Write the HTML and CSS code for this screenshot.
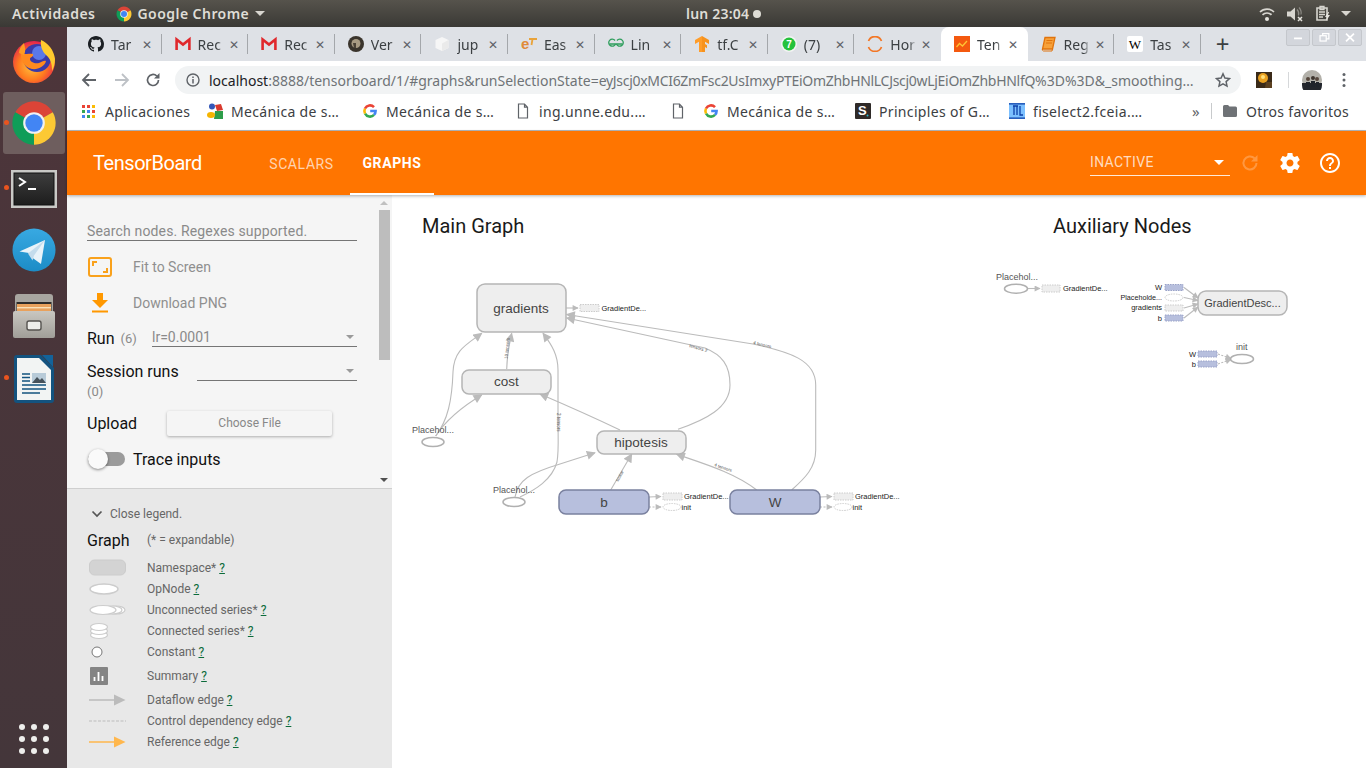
FILE: index.html
```html
<!DOCTYPE html>
<html lang="es">
<head>
<meta charset="utf-8">
<title>TensorBoard</title>
<link rel="stylesheet" href="styles.css">
</head>
<body>
<svg class="sprites" aria-hidden="true">
  <defs>
    <symbol id="i-chrome" viewBox="0 0 48 48">
      <path d="M24 24L6.7 14A20 20 0 0 1 41.3 14Z" fill="#db4437"/>
      <path d="M24 24L41.3 14A20 20 0 0 1 24 44Z" fill="#fcc934"/>
      <path d="M24 24L24 44A20 20 0 0 1 6.7 14Z" fill="#0f9d58"/>
      <circle cx="24" cy="24" r="10" fill="#f1f1f1"/>
      <circle cx="24" cy="24" r="8" fill="#4285f4"/>
    </symbol>
    <symbol id="i-g" viewBox="0 0 16 16">
      <g fill="none" stroke-width="2.6">
        <path d="M8.2 8H13.6A5.6 5.6 0 0 1 12 11.9" stroke="#4285f4"/>
        <path d="M12 11.9A5.6 5.6 0 0 1 3 10.5" stroke="#34a853"/>
        <path d="M3 10.5A5.6 5.6 0 0 1 3 5.5" stroke="#fbbc05"/>
        <path d="M3 5.5A5.6 5.6 0 0 1 12 4.1" stroke="#ea4335"/>
      </g>
    </symbol>
    <symbol id="i-gmail" viewBox="0 0 16 16">
      <path d="M1.6 14V3.4L8 8.6l6.4-5.2V14" fill="none" stroke="#e0282c" stroke-width="2.6"/>
    </symbol>
    <symbol id="i-doc" viewBox="0 0 12 16">
      <path d="M1.5 1h6l3 3.2V15h-9Z M7.5 1v3.2h3" fill="#fff" stroke="#5f6368" stroke-width="1.2"/>
    </symbol>
    <marker id="a" viewBox="0 0 10 10" refX="9" refY="5" markerWidth="10" markerHeight="9" markerUnits="userSpaceOnUse" orient="auto">
      <path d="M0 0L10 5L0 10Z" fill="#bbb"/>
    </marker>
    <marker id="as" viewBox="0 0 10 10" refX="9" refY="5" markerWidth="7" markerHeight="6" markerUnits="userSpaceOnUse" orient="auto">
      <path d="M0 0L10 5L0 10Z" fill="#bbb"/>
    </marker>
    <radialGradient id="ffglobe" cx=".45" cy=".6" r=".6">
      <stop offset="0" stop-color="#ffc43d"/>
      <stop offset=".55" stop-color="#ff7a1f"/>
      <stop offset="1" stop-color="#e3224e"/>
    </radialGradient>
    <linearGradient id="tg" x1="0" y1="0" x2="0" y2="1">
      <stop offset="0" stop-color="#38a9e2"/>
      <stop offset="1" stop-color="#1c8cc6"/>
    </linearGradient>
    <linearGradient id="cab" x1="0" y1="0" x2="0" y2="1">
      <stop offset="0" stop-color="#c9c7c1"/>
      <stop offset="1" stop-color="#a09e98"/>
    </linearGradient>
    <linearGradient id="termbg" x1="0" y1="0" x2="0" y2="1">
      <stop offset="0" stop-color="#3d3d3d"/>
      <stop offset="1" stop-color="#1d1d1d"/>
    </linearGradient>
  </defs>
</svg>

<header class="topbar">
  <div class="top-left">
    <span class="top-item">Actividades</span>
    <svg class="top-chrome"><use href="#i-chrome"/></svg>
    <span class="top-item">Google Chrome</span>
    <span class="top-caret"></span>
  </div>
  <div class="clock"><span class="top-item">lun 23:04</span><span class="clock-dot"></span></div>
  <div class="top-right">
    <svg class="tray" viewBox="0 0 18 18"><g fill="none" stroke="#d8d6d0" stroke-width="1.7"><path d="M2 7a10 10 0 0 1 14 0"/><path d="M4.5 9.8a6.5 6.5 0 0 1 9 0"/></g><circle cx="9" cy="14" r="2" fill="#e6e4de"/></svg>
    <svg class="tray" viewBox="0 0 18 18"><path d="M1 6.5h3.5L9 2.5v13l-4.5-4H1Z" fill="#d8d6d0"/><path d="M11 4.5a6 6 0 0 1 1.5 6M13 2.5a8 8 0 0 1 2 7" fill="none" stroke="#8d8b85" stroke-width="1.2"/><path d="M12 12l4 4m0-4l-4 4" stroke="#e6e4de" stroke-width="1.5"/></svg>
    <svg class="tray" viewBox="0 0 18 18"><path d="M3 3h10v12H3Z" fill="none" stroke="#d8d6d0" stroke-width="1.6"/><path d="M6 1.5h4v3H6ZM5 7h6M5 9.5h6M5 12h4" fill="none" stroke="#d8d6d0" stroke-width="1.3"/><path d="M14 7l-3 5h2l-1 4 4-6h-2l1-3Z" fill="#e6e4de"/></svg>
    <span class="top-caret"></span>
  </div>
</header>

<div class="desktop">
  <nav class="dock">
    <div class="dock-item">
      <svg class="dock-firefox" viewBox="0 0 44 44">
        <circle cx="22" cy="23" r="21" fill="url(#ffglobe)"/>
        <circle cx="25" cy="19" r="14" fill="#3a3aa8"/>
        <circle cx="27" cy="14" r="7" fill="#5a78e8"/>
        <path d="M9 12c3 5 8 2 12 3 1 3-3 3-3 5 0 3 5 5 9 4 3-1 5-3 7-2-1 5-8 9-14 8C11 28 8 20 9 12Z" fill="#ff8a1f"/>
        <path d="M29 1c7 3 13 10 14 19 0 5-1 8-3 12 0-8-2-13-6-16-3-3-6-8-5-15Z" fill="#ffcb2e"/>
        <path d="M12 4c-3 3-5 6-5 10l5 2c2-4 1-8 0-12Z" fill="#ff9b22"/>
      </svg>
    </div>
    <div class="dock-item dock-active">
      <span class="dock-dot"></span>
      <svg class="dock-chrome"><use href="#i-chrome"/></svg>
    </div>
    <div class="dock-item dock-item-term">
      <span class="dock-dot"></span>
      <svg class="dock-term" viewBox="0 0 46 38">
        <rect width="46" height="38" fill="#c9c9c6"/>
        <rect x="3" y="3" width="40" height="32" fill="url(#termbg)" stroke="#111"/>
        <path d="M8 8l6 4-6 4" fill="none" stroke="#fff" stroke-width="2"/>
        <path d="M17 19h8" stroke="#fff" stroke-width="2"/>
      </svg>
    </div>
    <div class="dock-item dock-item-tele">
      <svg class="dock-tele" viewBox="0 0 44 44">
        <circle cx="22" cy="22" r="21.5" fill="url(#tg)"/>
        <path d="M7.500 23.500L33 12l-4 24-9-6.500-3-4.500Z" fill="#e9f3f9"/>
        <path d="M16 25.500L33 12 22 27.500l-1.500 5Z" fill="#c4dcec"/>
      </svg>
    </div>
    <div class="dock-item dock-item-files">
      <svg class="dock-files" viewBox="0 0 42 44">
        <path d="M2 3q0-3 3-3h32q3 0 3 3v42H2Z" fill="#a8a6a0"/>
        <rect x="3.500" y="8" width="35" height="10" fill="#2f2c2a"/>
        <rect x="4" y="10" width="34" height="8" fill="#e9a15c"/>
        <rect x="4" y="13" width="34" height="1.400" fill="#fbe2b9"/>
        <rect y="17" width="42" height="27" rx="2" fill="url(#cab)"/>
        <rect x="14" y="27" width="14" height="9" rx="2" fill="#eeeeea" stroke="#55534f" stroke-width="1.400"/>
      </svg>
    </div>
    <div class="dock-item">
      <span class="dock-dot"></span>
      <svg class="dock-writer" viewBox="0 0 40 48">
        <path d="M0 3q0-3 3-3h24l13 13v32q0 3-3 3H3q-3 0-3-3Z" fill="#13537f"/>
        <path d="M3 3h22l12 12v30H3Z" fill="#f2f4f3"/>
        <path d="M28 0h11v12Z" fill="#13639a"/>
        <path d="M8 19h8M8 22.500h8M8 26h8M8 30h24M8 34h24M8 38h18" stroke="#13537f" stroke-width="1.700"/>
        <rect x="18" y="18" width="14" height="10" fill="#b8cbd8"/>
        <path d="M18 28l5-6 3 3 2-2 4 5Z" fill="#47525a"/>
      </svg>
    </div>
    <div class="apps-grid">
      <i></i><i></i><i></i><i></i><i></i><i></i><i></i><i></i><i></i>
    </div>
  </nav>

  <main class="window">
    <div class="tabstrip">
      <div class="tab"><svg class="fav" viewBox="0 0 16 16"><path fill="#1b1f23" d="M8 0C3.58 0 0 3.58 0 8c0 3.54 2.29 6.53 5.47 7.59.4.07.55-.17.55-.38 0-.19-.01-.82-.01-1.49-2.01.37-2.53-.49-2.69-.94-.09-.23-.48-.94-.82-1.13-.28-.15-.68-.52-.01-.53.63-.01 1.08.58 1.23.82.72 1.21 1.87.87 2.33.66.07-.52.28-.87.51-1.07-1.78-.2-3.64-.89-3.64-3.95 0-.87.31-1.59.82-2.15-.08-.2-.36-1.02.08-2.12 0 0 .67-.21 2.2.82.64-.18 1.32-.27 2-.27.68 0 1.36.09 2 .27 1.53-1.04 2.2-.82 2.2-.82.44 1.1.16 1.92.08 2.12.51.56.82 1.27.82 2.15 0 3.07-1.87 3.75-3.65 3.95.29.25.54.73.54 1.48 0 1.07-.01 1.93-.01 2.2 0 .21.15.46.55.38A8.013 8.013 0 0016 8c0-4.42-3.58-8-8-8z"/></svg><span class="tab-title">Tar</span><span class="tab-x">✕</span></div>
      <div class="tab"><svg class="fav"><use href="#i-gmail"/></svg><span class="tab-title">Rec</span><span class="tab-x">✕</span></div>
      <div class="tab"><svg class="fav"><use href="#i-gmail"/></svg><span class="tab-title">Rec</span><span class="tab-x">✕</span></div>
      <div class="tab"><svg class="fav" viewBox="0 0 16 16"><circle cx="8" cy="8" r="8" fill="#3a342c"/><circle cx="8" cy="7.500" r="4.500" fill="#a89a82"/><path d="M5 7h3v5H6Z" fill="#4b4236"/></svg><span class="tab-title">Ver</span><span class="tab-x">✕</span></div>
      <div class="tab"><svg class="fav" viewBox="0 0 16 16"><path d="M8 1l6.500 3v8L8 15l-6.500-3V4Z" fill="#f6f6f6"/><path d="M8 7.500l6.500-3.500v8L8 15Z" fill="#eaeaea"/></svg><span class="tab-title">jup</span><span class="tab-x">✕</span></div>
      <div class="tab"><svg class="fav" viewBox="0 0 16 16"><text class="fav-et" x="0" y="13">e</text><path d="M8 3h8M11.500 3l-1 6" stroke="#e9a33a" stroke-width="1.800" fill="none"/></svg><span class="tab-title">Eas</span><span class="tab-x">✕</span></div>
      <div class="tab"><svg class="fav" viewBox="0 0 16 16"><g fill="none" stroke="#2f9e5d" stroke-width="1.300"><path d="M8 8H1.500M8 8h6.500"/><path d="M7 4.500A3.500 3.500 0 1 0 7.500 8M9 4.500A3.500 3.500 0 1 1 8.500 8"/></g></svg><span class="tab-title">Lin</span><span class="tab-x">✕</span></div>
      <div class="tab"><svg class="fav" viewBox="0 0 16 16"><path d="M8 0L15 4v4l-4-2.300V8l2 1.200v3L11 11v5l-3 0V0Z" fill="#f7931e"/><path d="M8 0L1 4v4l4-2.300V16h3Z" fill="#ff9d2a"/></svg><span class="tab-title">tf.C</span><span class="tab-x">✕</span></div>
      <div class="tab"><svg class="fav" viewBox="0 0 16 16"><circle cx="8" cy="8" r="8" fill="#f4f4f4"/><circle cx="8" cy="8" r="6.500" fill="#25c23c"/><text class="fav-7" x="8" y="11.500">7</text></svg><span class="tab-title">(7)</span><span class="tab-x">✕</span></div>
      <div class="tab"><svg class="fav" viewBox="0 0 16 16"><g fill="none" stroke="#f37726" stroke-width="1.700"><path d="M1.500 5a7 7 0 0 1 13 0"/><path d="M1.500 11a7 7 0 0 0 13 0"/></g></svg><span class="tab-title">Hor</span><span class="tab-x">✕</span></div>
      <div class="tab tab-active"><svg class="fav" viewBox="0 0 16 16"><rect width="16" height="16" fill="#f4590f"/><path d="M2.500 11l3-3.500 3 2.500 4.500-5" fill="none" stroke="#ffc433" stroke-width="1.300"/></svg><span class="tab-title">Ten</span><span class="tab-x">✕</span></div>
      <div class="tab"><svg class="fav" viewBox="0 0 16 16"><path d="M4 1.500h10L11.500 13H1.500Z" fill="#f7a13a" stroke="#e0730c" stroke-width="1.300"/><path d="M1.500 13a1.500 1.500 0 0 0 1 2H11l.5-2M5.500 4.500h6M5 7h6" fill="none" stroke="#e0730c" stroke-width="1"/></svg><span class="tab-title">Reg</span><span class="tab-x">✕</span></div>
      <div class="tab"><svg class="fav" viewBox="0 0 16 16"><rect width="16" height="16" rx="2" fill="#fff"/><text class="fav-w" x="8" y="12.500">W</text></svg><span class="tab-title">Tas</span><span class="tab-x">✕</span></div>
      <span class="newtab">+</span>
      <div class="winctl">
        <span class="winbtn"><svg viewBox="0 0 23 17"><path d="M7 9.500h9" stroke="#fff" stroke-width="2"/></svg></span>
        <span class="winbtn"><svg viewBox="0 0 23 17"><g fill="none" stroke="#fff" stroke-width="1.400"><rect x="7" y="6.500" width="7" height="6"/><path d="M10 6.500V4h7v6h-3"/></g></svg></span>
        <span class="winbtn"><svg viewBox="0 0 23 17"><path d="M7 4l9 9m0-9l-9 9" stroke="#fff" stroke-width="2"/></svg></span>
      </div>
    </div>

    <div class="toolbar">
      <svg class="tb-ic tb-back" viewBox="0 0 16 16"><path d="M15 8H2M8 2L2 8l6 6" fill="none" stroke="#5f6368" stroke-width="1.800"/></svg>
      <svg class="tb-ic tb-fwd" viewBox="0 0 16 16"><path d="M1 8h13M8 2l6 6-6 6" fill="none" stroke="#bdc1c6" stroke-width="1.800"/></svg>
      <svg class="tb-ic tb-reload" viewBox="0 0 16 16"><path d="M13.500 8A5.500 5.500 0 1 1 11.800 4" fill="none" stroke="#5f6368" stroke-width="1.700"/><path d="M14.500 1v5.500H9Z" fill="#5f6368"/></svg>
      <div class="omnibox">
        <svg class="omni-info" viewBox="0 0 14 14"><circle cx="7" cy="7" r="6" fill="none" stroke="#5f6368" stroke-width="1.400"/><path d="M7 6v4.500M7 3.500v1.500" stroke="#5f6368" stroke-width="1.500"/></svg>
        <span class="url"><b>localhost</b>:8888/tensorboard/1/#graphs&amp;runSelectionState=<span class="url-token">eyJscj0xMCI6ZmFsc2UsImxyPTEiOmZhbHNlLCJscj0wLjEiOmZhbHNlfQ</span>%3D%3D&amp;_smoothing…</span>
        <svg class="omni-star" viewBox="0 0 16 16"><path d="M8 1.800l1.900 4.200 4.600.5-3.400 3.100.9 4.500L8 11.800l-4 2.300.9-4.500L1.500 6.500l4.600-.5Z" fill="none" stroke="#5f6368" stroke-width="1.500"/></svg>
      </div>
      <svg class="ext" viewBox="0 0 16 16"><rect width="16" height="16" fill="#3a2a18"/><circle cx="7" cy="6" r="5" fill="#e8a020"/><circle cx="7" cy="5" r="2" fill="#ffe07a"/><path d="M10 10h6v6h-7Z" fill="#5b4020"/></svg>
      <span class="tb-sep"></span>
      <svg class="avatar" viewBox="0 0 20 20"><circle cx="10" cy="10" r="10" fill="#b3b1aa"/><path d="M0 13h20v2a10 10 0 0 1-20 0Z" fill="#23262c"/><circle cx="6" cy="9" r="2" fill="#55463c"/><circle cx="11" cy="8" r="2" fill="#3d342d"/><circle cx="15" cy="9" r="2" fill="#55463c"/><path d="M4 12h4v5H4ZM9 11h4v6H9ZM14 12h3v5h-3Z" fill="#20242b"/></svg>
      <svg class="kebab" viewBox="0 0 4 16"><circle cx="2" cy="2.500" r="1.500"/><circle cx="2" cy="8" r="1.500"/><circle cx="2" cy="13.500" r="1.500"/></svg>
    </div>

    <div class="bookmarks">
      <div class="bm"><svg class="bm-apps" viewBox="0 0 13 13"><rect width="3" height="3" fill="#ea4335"/><rect x="5" width="3" height="3" fill="#ea4335"/><rect x="10" width="3" height="3" fill="#fbbc05"/><rect y="5" width="3" height="3" fill="#34a853"/><rect x="5" y="5" width="3" height="3" fill="#4285f4"/><rect x="10" y="5" width="3" height="3" fill="#ea4335"/><rect y="10" width="3" height="3" fill="#4285f4"/><rect x="5" y="10" width="3" height="3" fill="#34a853"/><rect x="10" y="10" width="3" height="3" fill="#fbbc05"/></svg><span class="bm-label">Aplicaciones</span></div>
      <div class="bm"><svg class="bm-ic" viewBox="0 0 16 16"><circle cx="5" cy="3.500" r="3" fill="#3457b8"/><path d="M8 2l6-1 2 6-6 1Z" fill="#d93a2e"/><path d="M8 8h8v8H7Z" fill="#2e9d49"/><ellipse cx="4" cy="12" rx="4" ry="3" fill="#f5b400"/></svg><span class="bm-label">Mecánica de s…</span></div>
      <div class="bm"><svg class="bm-ic"><use href="#i-g"/></svg><span class="bm-label">Mecánica de s…</span></div>
      <div class="bm"><svg class="bm-doc"><use href="#i-doc"/></svg><span class="bm-label">ing.unne.edu.…</span></div>
      <div class="bm"><svg class="bm-doc"><use href="#i-doc"/></svg></div>
      <div class="bm"><svg class="bm-ic"><use href="#i-g"/></svg><span class="bm-label">Mecánica de s…</span></div>
      <div class="bm"><svg class="bm-ic" viewBox="0 0 16 16"><rect width="16" height="16" rx="1" fill="#2f2a28"/><text class="fav-s" x="7.500" y="12">S</text><circle cx="12.500" cy="12.500" r="1" fill="#2bb5c9"/></svg><span class="bm-label">Principles of G…</span></div>
      <div class="bm"><svg class="bm-ic" viewBox="0 0 16 16"><rect width="16" height="16" fill="#7cc0ff"/><path d="M0 .8h16M0 15.200h16M4 3h5M5 3v9M8 3v9M11 3v9h3" stroke="#0c3fa8" stroke-width="1.300" fill="none"/></svg><span class="bm-label">fiselect2.fceia.…</span></div>
      <div class="bm-end">
        <span class="bm-more">»</span>
        <span class="bm-sep"></span>
        <svg class="bm-folder" viewBox="0 0 14 12"><path d="M0 1.500q0-1.500 1.500-1.500H5l1.500 1.500h6q1.500 0 1.500 1.500v7.500q0 1.500-1.500 1.500h-11Q0 12 0 10.500Z" fill="#6f7276"/></svg>
        <span class="bm-label">Otros favoritos</span>
      </div>
    </div>

    <div class="tb-header">
      <span class="tb-logo">TensorBoard</span>
      <nav class="tb-tabs">
        <span class="tb-tab tb-tab-scalars">SCALARS</span>
        <span class="tb-tab tb-tab-on">GRAPHS</span>
      </nav>
      <div class="tb-actions">
        <div class="tb-select"><span>INACTIVE</span><i class="caret-white"></i></div>
        <svg class="tb-act tb-dim" viewBox="0 0 20 20"><path d="M16.500 10A6.500 6.500 0 1 1 14.500 5.300" fill="none" stroke="#fff" stroke-width="2"/><path d="M17.500 2v6.500H11Z" fill="#fff"/></svg>
        <svg class="tb-act" viewBox="0 0 24 24"><path fill="#fff" d="M19.430 12.980c.04-.32.07-.64.07-.98s-.03-.66-.07-.98l2.110-1.650c.19-.15.24-.42.12-.64l-2-3.460c-.12-.22-.39-.3-.61-.22l-2.490 1c-.52-.4-1.080-.73-1.690-.98l-.38-2.650C14.460 2.180 14.250 2 14 2h-4c-.25 0-.46.18-.49.42l-.38 2.650c-.61.25-1.170.59-1.690.98l-2.490-1c-.23-.09-.49 0-.61.22l-2 3.460c-.13.220-.07.49.12.64l2.110 1.650c-.04.32-.07.65-.07.98s.03.66.07.98l-2.110 1.650c-.19.150-.24.420-.12.640l2 3.460c.12.220.39.300.61.220l2.490-1c.52.400 1.080.730 1.690.980l.38 2.650c.03.240.24.420.49.420h4c.25 0 .46-.18.49-.42l.38-2.650c.61-.25 1.170-.59 1.690-.98l2.490 1c.23.090.49 0 .61-.22l2-3.460c.12-.22.07-.49-.12-.64l-2.110-1.650zM12 15.500c-1.930 0-3.500-1.570-3.500-3.500s1.570-3.500 3.500-3.500 3.500 1.570 3.500 3.500-1.570 3.500-3.500 3.500z"/></svg>
        <svg class="tb-act" viewBox="0 0 24 24"><path fill="#fff" d="M11 18h2v-2h-2v2zm1-16C6.480 2 2 6.480 2 12s4.480 10 10 10 10-4.480 10-10S17.520 2 12 2zm0 18c-4.410 0-8-3.590-8-8s3.590-8 8-8 8 3.590 8 8-3.590 8-8 8zm0-14c-2.210 0-4 1.790-4 4h2c0-1.100.9-2 2-2s2 .9 2 2c0 2-3 1.750-3 5h2c0-2.250 3-2.500 3-5 0-2.210-1.790-4-4-4z"/></svg>
      </div>
    </div>

    <div class="tb-body">
      <aside class="sidebar">
        <div class="side-top">
          <div class="controls">
            <div class="search">Search nodes. Regexes supported.</div>
            <div class="action action-first">
              <svg class="act-ic" viewBox="0 0 24 20"><rect x="1" y="1" width="22" height="18" rx="2" fill="none" stroke="#f9a11b" stroke-width="2"/><path d="M5 9V5h4M19 11v4h-4" fill="none" stroke="#f9a11b" stroke-width="2"/></svg>
              <span>Fit to Screen</span>
            </div>
            <div class="action">
              <svg class="act-ic" viewBox="0 0 24 20"><path d="M9 0h6v7h5l-8 8-8-8h5Z" fill="#ff9800"/><rect x="4" y="17.500" width="16" height="2" fill="#ff9800"/></svg>
              <span>Download PNG</span>
            </div>
            <div class="run-row">
              <span class="ctl-label">Run</span><span class="count">(6)</span>
              <div class="select select-run"><span>lr=0.0001</span><i class="caret-grey"></i></div>
            </div>
            <div class="session-row">
              <span class="ctl-label">Session runs</span>
              <div class="select select-session"><i class="caret-grey"></i></div>
            </div>
            <div class="count count-session">(0)</div>
            <div class="upload-row">
              <span class="ctl-label">Upload</span>
              <span class="choose">Choose File</span>
            </div>
            <div class="trace-row">
              <span class="toggle"><i></i></span>
              <span class="ctl-label">Trace inputs</span>
            </div>
          </div>
          <div class="sbar">
            <i class="sb-up"></i>
            <div class="sb-track"><div class="sb-thumb"></div></div>
            <i class="sb-down"></i>
          </div>
        </div>

        <div class="legend">
          <div class="legend-head">
            <svg class="chev" viewBox="0 0 12 8"><path d="M1.500 1.500L6 6l4.500-4.500" fill="none" stroke="#555" stroke-width="1.700"/></svg>
            <span>Close legend.</span>
          </div>
          <div class="legend-title"><span class="legend-graph">Graph</span><span>(* = expandable)</span></div>
          <div class="lg lg-1"><svg class="lg-ic" viewBox="0 0 40 18"><rect x="2.500" y="1" width="36" height="15" rx="5" fill="#d3d3d3" stroke="#ccc"/></svg><span>Namespace* <a>?</a></span></div>
          <div class="lg lg-2"><svg class="lg-ic" viewBox="0 0 40 18"><ellipse cx="17" cy="9" rx="14" ry="5" fill="#fff" stroke="#ccc" stroke-width="1.500"/></svg><span>OpNode <a>?</a></span></div>
          <div class="lg lg-3"><svg class="lg-ic" viewBox="0 0 40 18"><g fill="#fff" stroke="#ccc" stroke-width="1.200"><ellipse cx="29" cy="9" rx="9" ry="4"/><ellipse cx="25" cy="9" rx="10" ry="4"/><ellipse cx="16" cy="9" rx="13" ry="4.500"/></g></svg><span>Unconnected series* <a>?</a></span></div>
          <div class="lg lg-4"><svg class="lg-ic" viewBox="0 0 40 18"><g fill="#fff" stroke="#ccc" stroke-width="1.200"><ellipse cx="12" cy="13" rx="8.500" ry="3.500"/><ellipse cx="12" cy="9" rx="8.500" ry="3.500"/><ellipse cx="12" cy="5" rx="8.500" ry="3.500"/></g></svg><span>Connected series* <a>?</a></span></div>
          <div class="lg lg-5"><svg class="lg-ic" viewBox="0 0 40 18"><circle cx="10" cy="9" r="5" fill="#fff" stroke="#777"/></svg><span>Constant <a>?</a></span></div>
          <div class="lg lg-6"><svg class="lg-ic" viewBox="0 0 40 18"><rect x="3" width="18" height="18" rx="1" fill="#848484"/><path d="M7.500 10v4M11.500 5v9M15.500 9v5" stroke="#fff" stroke-width="1.800"/></svg><span>Summary <a>?</a></span></div>
          <div class="lg lg-7"><svg class="lg-ic" viewBox="0 0 40 18"><path d="M2 9h28" stroke="#bbb" stroke-width="1.500"/><path d="M27 3.500L38.500 9 27 14.500Z" fill="#bbb"/></svg><span>Dataflow edge <a>?</a></span></div>
          <div class="lg lg-8"><svg class="lg-ic" viewBox="0 0 40 18"><path d="M2 9h37" stroke="#bbb" stroke-width="1.200" stroke-dasharray="3 1.500"/></svg><span>Control dependency edge <a>?</a></span></div>
          <div class="lg lg-9"><svg class="lg-ic" viewBox="0 0 40 18"><path d="M2 9h28" stroke="#ffb74d" stroke-width="1.500"/><path d="M27 3.500L38.500 9 27 14.500Z" fill="#ffb74d"/></svg><span>Reference edge <a>?</a></span></div>
        </div>
      </aside>

      <section class="canvas">
        <svg class="scene" viewBox="392 195 974 573">
          <text class="scene-title" x="422" y="233">Main Graph</text>
          <text class="scene-title" x="1053" y="233">Auxiliary Nodes</text>

          <g class="edges">
            <path d="M435.700 436C448 420 452 400 453 372C454 350 466 345 481.700 333.300" marker-end="url(#a)"/>
            <path d="M435.700 436C446 420 460 408 481.700 395" marker-end="url(#a)"/>
            <path d="M506.700 369C507 355 509 345 511.700 333.300" marker-end="url(#a)"/>
            <path d="M520 497C535 490 552 480 557 462C559 450 558 440 558 420L558 370C558 355 552 345 543 333.300" marker-end="url(#a)"/>
            <path d="M515 497C518 480 530 473 560 464L595 452.700" marker-end="url(#a)"/>
            <path d="M620 430C595 418 568 406 540 394" marker-end="url(#a)"/>
            <path d="M610.700 490L631.700 454" marker-end="url(#a)"/>
            <path d="M756.700 490C735 473 705 464 676.700 454.300" marker-end="url(#a)"/>
            <path d="M678 429.300C705 420 730 408 730 385C730 365 722 355 705 348L566.700 318" marker-end="url(#a)"/>
            <path d="M791.700 490C805 478 815.700 468 815.700 450V385C815.700 360 790 352 753 344L566.700 314.500" marker-end="url(#a)"/>
            <path d="M565 308H578" marker-end="url(#as)"/>
            <path d="M649 497L661 496.500" marker-end="url(#as)"/>
            <path d="M820 497L832 496.500" marker-end="url(#as)"/>
            <path class="dash" d="M649 507H661" marker-end="url(#as)"/>
            <path class="dash" d="M820 507H832" marker-end="url(#as)"/>
            <path d="M1028 288.500H1040" marker-end="url(#as)"/>
            <path d="M1184 287.500L1198 298" marker-end="url(#as)"/>
            <path d="M1184 297.500L1198 300.500" marker-end="url(#as)"/>
            <path d="M1184 308L1198 304" marker-end="url(#as)"/>
            <path d="M1184 318L1198 307" marker-end="url(#as)"/>
            <path class="dash" d="M1218 354L1231 358.500" marker-end="url(#as)"/>
            <path class="dash" d="M1218 364L1231 359.500" marker-end="url(#as)"/>
          </g>

          <g class="edge-labels">
            <text transform="translate(507.500 359) rotate(-84)">10 tensors</text>
            <text transform="translate(557 413) rotate(90)">2 tensors</text>
            <text transform="translate(618 482) rotate(-60)">scalar</text>
            <text transform="translate(714 466) rotate(19)">4 tensors</text>
            <text transform="translate(689 347) rotate(16)">tensors 2</text>
            <text transform="translate(753 344) rotate(13)">4 tensors</text>
          </g>

          <g class="node">
            <rect x="477" y="284" width="89" height="48" rx="8"/>
            <rect x="462" y="370" width="89" height="24" rx="7"/>
            <rect x="597" y="431" width="89" height="23" rx="7"/>
            <rect x="1198" y="291" width="89" height="24" rx="8"/>
          </g>
          <g class="node node-var">
            <rect x="559" y="490" width="90" height="24" rx="7"/>
            <rect x="730" y="490" width="90" height="24" rx="7"/>
          </g>
          <g class="node-text">
            <text x="521" y="313">gradients</text>
            <text x="506.500" y="386">cost</text>
            <text x="641" y="447">hipotesis</text>
            <text x="604" y="507">b</text>
            <text x="775" y="507">W</text>
            <text class="node-text-aux" x="1242.500" y="307">GradientDesc...</text>
          </g>

          <g class="op">
            <ellipse cx="433" cy="442" rx="11" ry="4.500"/>
            <ellipse cx="514" cy="502" rx="11" ry="4.500"/>
            <ellipse cx="1016" cy="288.700" rx="11.500" ry="4.500"/>
            <ellipse cx="1242" cy="359" rx="11.500" ry="4.500"/>
          </g>
          <g class="op-text">
            <text x="412" y="433">Placehol...</text>
            <text x="493" y="493">Placehol...</text>
            <text x="996" y="280">Placehol...</text>
            <text x="1236" y="350">init</text>
          </g>

          <g class="mini">
            <rect x="580" y="304.500" width="19" height="7"/>
            <rect x="663" y="493" width="19" height="7"/>
            <rect x="834" y="493" width="19" height="7"/>
            <rect x="1042" y="285" width="18" height="7"/>
            <rect x="1165" y="305" width="18" height="6"/>
            <ellipse cx="672" cy="507" rx="9" ry="3.500"/>
            <ellipse cx="843" cy="507" rx="9" ry="3.500"/>
            <ellipse cx="1174" cy="297.500" rx="9" ry="3.500"/>
          </g>
          <g class="mini mini-var">
            <rect x="1165" y="284.500" width="18" height="6"/>
            <rect x="1165" y="315" width="18" height="6"/>
            <rect x="1198" y="351" width="19" height="6"/>
            <rect x="1198" y="361" width="19" height="6"/>
          </g>
          <g class="mini-text">
            <text x="601.500" y="311">GradientDe...</text>
            <text x="684" y="499">GradientDe...</text>
            <text x="681.500" y="510">init</text>
            <text x="855" y="499">GradientDe...</text>
            <text x="852.500" y="510">init</text>
            <text x="1063" y="291">GradientDe...</text>
          </g>
          <g class="mini-text mini-end">
            <text x="1162" y="290">W</text>
            <text class="mini-tight" x="1162" y="300">Placeholde...</text>
            <text x="1162" y="310">gradients</text>
            <text x="1162" y="321">b</text>
            <text x="1196" y="357">W</text>
            <text x="1196" y="367">b</text>
          </g>
        </svg>
      </section>
    </div>
  </main>
</div>
</body>
</html>
```

FILE: styles.css
```css
* { box-sizing: border-box; }
html, body { margin: 0; height: 100%; overflow: hidden; }
body {
  width: 1366px; height: 768px;
  display: flex; flex-direction: column;
  font-family: "Noto Sans", sans-serif;
  background: #fff;
}
.sprites { position: absolute; width: 0; height: 0; }

/* top bar */
.topbar {
  flex: none; height: 27px;
  display: flex; align-items: center;
  background: linear-gradient(#56534c, #3a3935);
  color: #dfddd6;
  font-size: 14px; font-weight: 600; letter-spacing: .45px;
}
.top-left { flex: none; width: 686px; padding-left: 12px; display: flex; align-items: center; }
.top-chrome { width: 18px; height: 18px; margin: 0 4px 0 20px; }
.top-caret {
  width: 0; height: 0; margin-left: 6px;
  border-left: 5px solid transparent; border-right: 5px solid transparent;
  border-top: 5px solid #d8d6d0;
}
.clock { display: flex; align-items: center; letter-spacing: .2px; }
.clock-dot { width: 8px; height: 8px; margin-left: 4px; border-radius: 50%; background: #dfddd6; }
.top-right { margin-left: auto; padding-right: 15px; display: flex; align-items: center; gap: 10px; }
.top-right .top-caret { margin-left: -1px; }
.tray { width: 18px; height: 18px; }

.desktop { flex: 1; display: flex; min-height: 0; }

/* dock */
.dock {
  flex: none; width: 67px;
  display: flex; flex-direction: column; align-items: center;
  background: linear-gradient(#4d353a, #44363a);
  padding-top: 2px;
}
.dock-item {
  position: relative; width: 62px; height: 63px;
  display: flex; align-items: center; justify-content: center;
}
.dock-active { background: #6e5e5e; border-radius: 3px; height: 62px; }
.dock-item-term { margin-top: 3px; }
.dock-item-tele { margin-top: -2px; }
.dock-item-files { margin-top: 3px; }
.dock-dot {
  position: absolute; left: 1px; top: 28px;
  width: 5px; height: 5px; border-radius: 50%; background: #e9541f;
}
.dock-firefox { width: 44px; height: 44px; }
.dock-chrome { width: 52px; height: 52px; }
.dock-term { width: 46px; height: 38px; }
.dock-tele { width: 44px; height: 44px; }
.dock-files { width: 42px; height: 44px; }
.dock-writer { width: 40px; height: 48px; }
.apps-grid {
  margin-top: auto; margin-bottom: 14px;
  display: grid; grid-template-columns: repeat(3, 6px); gap: 6px;
}
.apps-grid i { width: 6px; height: 6px; border-radius: 50%; background: #eeeeec; }

/* chrome */
.window { flex: 1; min-width: 0; display: flex; flex-direction: column; }
.tabstrip {
  flex: none; height: 34px; padding-left: 8px;
  display: flex; align-items: stretch;
  background: #dee1e6; color: #3c4043; font-size: 14px;
}
.tab {
  flex: none; width: 86.6px; padding-left: 13px;
  display: flex; align-items: center;
  position: relative;
}
.tab::after {
  content: ""; position: absolute; right: 0; top: 7px; bottom: 7px; width: 1px; background: #a4a7ab;
}
.tab:has(+ .tab-active)::after, .tab-active::after { display: none; }
.tab-active { background: #fff; border-radius: 8px 8px 0 0; }
.fav { flex: none; width: 16px; height: 16px; }
.tab-title {
  width: 26px; margin-left: 7px; overflow: hidden; white-space: nowrap;
  -webkit-mask-image: linear-gradient(90deg, #000 75%, transparent);
  mask-image: linear-gradient(90deg, #000 75%, transparent);
}
.tab-x { margin-left: 3px; width: 14px; font-size: 12px; color: #5f6368; text-align: center; }
.fav-et { font: 700 15px "Liberation Sans", sans-serif; fill: #e08a3a; }
.fav-7 { font: 700 10px "Liberation Sans", sans-serif; fill: #fff; text-anchor: middle; }
.fav-w { font: 400 13px "Liberation Serif", serif; fill: #000; text-anchor: middle; }
.fav-s { font: 700 13px "Liberation Sans", sans-serif; fill: #fff; text-anchor: middle; }
.newtab { margin-left: 15px; align-self: center; font-size: 24px; font-weight: 400; color: #3c4043; line-height: 1; }
.winctl { margin-left: auto; margin-right: 4px; margin-top: 2px; display: flex; gap: 2px; }
.winbtn { width: 24px; height: 17px; border: 1px solid #c4c7cc; border-radius: 2px; background: #d3d6dc; display: block; }
.winbtn svg { display: block; width: 22px; height: 15px; }

.toolbar {
  flex: none; height: 33px; padding-top: 5px; padding-right: 0;
  display: flex; align-items: center;
  background: #fff;
}
.tb-ic { flex: none; width: 16px; height: 16px; }
.tb-back { margin-left: 14px; }
.tb-fwd { margin-left: 17px; }
.tb-reload { margin-left: 15px; }
.omnibox {
  flex: none; margin-left: 14px; width: 1066px; height: 28px; padding: 0 10px 0 11px;
  display: flex; align-items: center;
  background: #f1f3f4; border-radius: 14px;
  font-size: 14px; color: #6f7377;
}
.omni-info { flex: none; width: 14px; height: 14px; margin-right: 9px; }
.url { flex: 1; white-space: nowrap; overflow: hidden; }
.url b { font-weight: 400; color: #202124; }
.url-token { letter-spacing: -.3px; }
.omni-star { flex: none; width: 16px; height: 16px; margin-right: 0; }
.ext { flex: none; width: 16px; height: 16px; margin-left: 15px; }
.tb-sep { flex: none; width: 1px; height: 16px; margin-left: 16px; background: #d6d8da; }
.avatar { flex: none; width: 20px; height: 20px; margin-left: 13px; }
.kebab { flex: none; width: 4px; height: 16px; margin-left: 20px; fill: #5f6368; }

.bookmarks {
  flex: none; height: 37px; padding-left: 15px; padding-bottom: 2px;
  display: grid; align-items: center;
  grid-template-columns: 125px 155px 155px 155px 31px 152px 154px 137px 1fr;
  background: #fff; border-bottom: 1px solid #b6b8bb;
  font-size: 14px; color: #3c4043; letter-spacing: .33px;
}
.bm { display: flex; align-items: center; white-space: nowrap; }
.bm-apps { flex: none; width: 13px; height: 13px; margin-right: 10px; }
.bm-ic { flex: none; width: 16px; height: 16px; margin-right: 8px; }
.bm-doc { flex: none; width: 12px; height: 16px; margin-right: 10px; }
.bm-label { display: block; }
.bm-end { display: flex; align-items: center; padding-left: 46px; }
.bm-more { width: 12px; color: #5f6368; font-size: 15px; }
.bm-sep { width: 1px; height: 16px; margin: 0 11px 0 7px; background: #c8cacc; }
.bm-folder { flex: none; width: 14px; height: 12px; margin-right: 9px; }

/* tensorboard header */
.tb-header {
  flex: none; height: 64px; position: relative; z-index: 2;
  display: flex; align-items: center;
  background: #ff7500; color: #fff;
  box-shadow: 0 1px 3px rgba(0,0,0,.3);
  font-family: Roboto, sans-serif;
}
.tb-logo { margin-left: 26px; font-size: 20px; letter-spacing: -.45px; width: 164px; }
.tb-tabs { display: flex; align-self: stretch; }
.tb-tab {
  display: flex; align-items: center; justify-content: center;
  width: 84px; padding-top: 2px; font-size: 14px; color: rgba(255,255,255,.7);
  letter-spacing: .6px;
}
.tb-tab-scalars { width: 89px; margin-right: 4px; }
.tb-tab-on { color: #fff; font-weight: 700; border-bottom: 2px solid #fff; }
.tb-actions { margin-left: auto; display: flex; align-items: center; padding-right: 24px; }
.tb-select {
  width: 140px; height: 27px; padding-top: 5px; position: relative;
  border-bottom: 1px solid rgba(255,255,255,.85);
  font-size: 14px; letter-spacing: .35px; color: rgba(255,255,255,.75);
  margin-top: -1px;
}
.caret-white {
  position: absolute; right: 6px; top: 11px;
  border-left: 5px solid transparent; border-right: 5px solid transparent; border-top: 5px solid #fff;
}
.tb-act { width: 24px; height: 24px; margin-left: 16px; }
.tb-dim { opacity: .25; width: 20px; height: 20px; margin-left: 10px; margin-right: 2px; }

/* body */
.tb-body { flex: 1; min-height: 0; display: flex; }
.sidebar { flex: none; width: 325px; display: flex; flex-direction: column; font-family: Roboto, sans-serif; }
.side-top { flex: none; height: 293px; display: flex; background: #f5f5f5; }
.controls { flex: 1; padding: 27px 21px 0 20px; min-width: 0; }
.search {
  height: 19px; border-bottom: 1px solid #757575;
  font-size: 14px; letter-spacing: .15px; color: #8a8a8a; white-space: nowrap; line-height: 18px;
}
.action { height: 36px; display: flex; align-items: center; font-size: 14px; color: #8f8f8f; }
.action-first { margin-top: 8px; }
.act-ic { flex: none; width: 24px; height: 20px; margin-right: 21px; margin-left: 1px; }
.ctl-label { font-size: 16px; color: #111; white-space: nowrap; }
.count { font-size: 13px; color: #8a8a8a; }
.run-row { display: flex; align-items: center; height: 24px; margin-top: 5px; }
.run-row .count { margin-left: 6px; }
.select { position: relative; border-bottom: 1px solid #757575; font-size: 14px; color: #8a8a8a; }
.select-run { margin-left: auto; width: 205px; height: 18px; line-height: 16px; }
.caret-grey {
  position: absolute; right: 3px; top: 6px;
  border-left: 4px solid transparent; border-right: 4px solid transparent; border-top: 4px solid #9a9a9a;
}
.session-row { display: flex; align-items: center; height: 24px; margin-top: 9px; }
.select-session { margin-left: auto; width: 160px; height: 18px; margin-top: 1px; }
.count-session { height: 16px; line-height: 16px; margin-top: 1px; }
.upload-row { display: flex; align-items: center; margin-top: 11px; height: 25px; }
.choose {
  margin-left: 30px; width: 165px; height: 25px; line-height: 25px; text-align: center;
  background: #f5f5f5; border-radius: 2px;
  box-shadow: 0 1px 3px rgba(0,0,0,.3);
  font-size: 12px; color: #888;
}
.trace-row { display: flex; align-items: center; margin-top: 12px; height: 22px; }
.toggle { position: relative; flex: none; width: 37px; height: 14px; margin-left: 1px; margin-right: 8px; border-radius: 7px; background: #9b9b9b; display: block; }
.toggle i {
  position: absolute; left: 0; top: -3px; width: 20px; height: 20px; border-radius: 50%;
  background: #fafafa; box-shadow: 0 1px 3px rgba(0,0,0,.45);
}
.sbar { flex: none; width: 14px; margin-right: 0; display: flex; flex-direction: column; align-items: center; padding-right: 2px; }
.sb-track { flex: 1; width: 100%; padding: 5px 1px 0 0; }
.sb-thumb { width: 11px; height: 150px; background: #bdbdbd; margin-left: 1px; }
.sb-up, .sb-down { flex: none; width: 0; height: 0; border-left: 4px solid transparent; border-right: 4px solid transparent; }
.sb-up { border-bottom: 4px solid #c0c0c0; margin-top: 6px; }
.sb-down { border-top: 4px solid #505050; margin-bottom: 6px; }

.legend {
  flex: 1; padding: 0 0 0 20px;
  background: #e8e8e8; border-top: 1px solid #cfcfcf;
  font-size: 12px; color: #666;
}
.legend-head { height: 14px; margin-top: 18px; display: flex; align-items: center; }
.chev { width: 12px; height: 8px; margin: 0 7px 0 4px; }
.legend-title { display: flex; align-items: center; height: 24px; margin-top: 7px; margin-bottom: 5px; }
.legend-graph { font-size: 16px; color: #111; width: 60px; }
.lg { display: flex; align-items: center; height: 21px; }
.lg-ic { flex: none; width: 40px; height: 18px; margin-right: 20px; }
.lg-6 { height: 27px; }
.lg-7 { height: 21px; }
.lg a { color: #0b6b3a; text-decoration: underline; }

/* graph */
.canvas { flex: 1; min-width: 0; background: #fff; }
.scene { display: block; width: 974px; height: 573px; }
.scene-title { font: 400 20px Roboto, sans-serif; fill: #1a1a1a; }
.edges path { fill: none; stroke: #bbb; stroke-width: 1.1; }
.edges .dash { stroke-dasharray: 2 1.5; }
.edge-labels text { font: 4.5px "Liberation Sans", sans-serif; fill: #555; }
.node rect { fill: #eee; stroke: #b5b5b5; stroke-width: 1.5; }
.node-var rect { fill: #b7bfdd; stroke: #7a819f; }
.node-text text { font: 13.5px "Liberation Sans", sans-serif; fill: #444; text-anchor: middle; }
.node-text .node-text-aux { font-size: 11px; }
.op ellipse { fill: #fff; stroke: #b0b0b0; stroke-width: 1.5; }
.op-text text { font: 9px "Liberation Sans", sans-serif; fill: #555; }
.mini rect, .mini ellipse { fill: #eee; stroke: #ccc; stroke-width: 1; stroke-dasharray: 1.5 1; }
.mini ellipse { fill: #fff; }
.mini-var rect { fill: #b7bfdd; stroke: #9aa3c8; }
.mini-text text { font: 7.5px "Liberation Sans", sans-serif; fill: #222; }
.mini-text .mini-tight { font-size: 7.2px; }
.mini-end text { text-anchor: end; }
```
